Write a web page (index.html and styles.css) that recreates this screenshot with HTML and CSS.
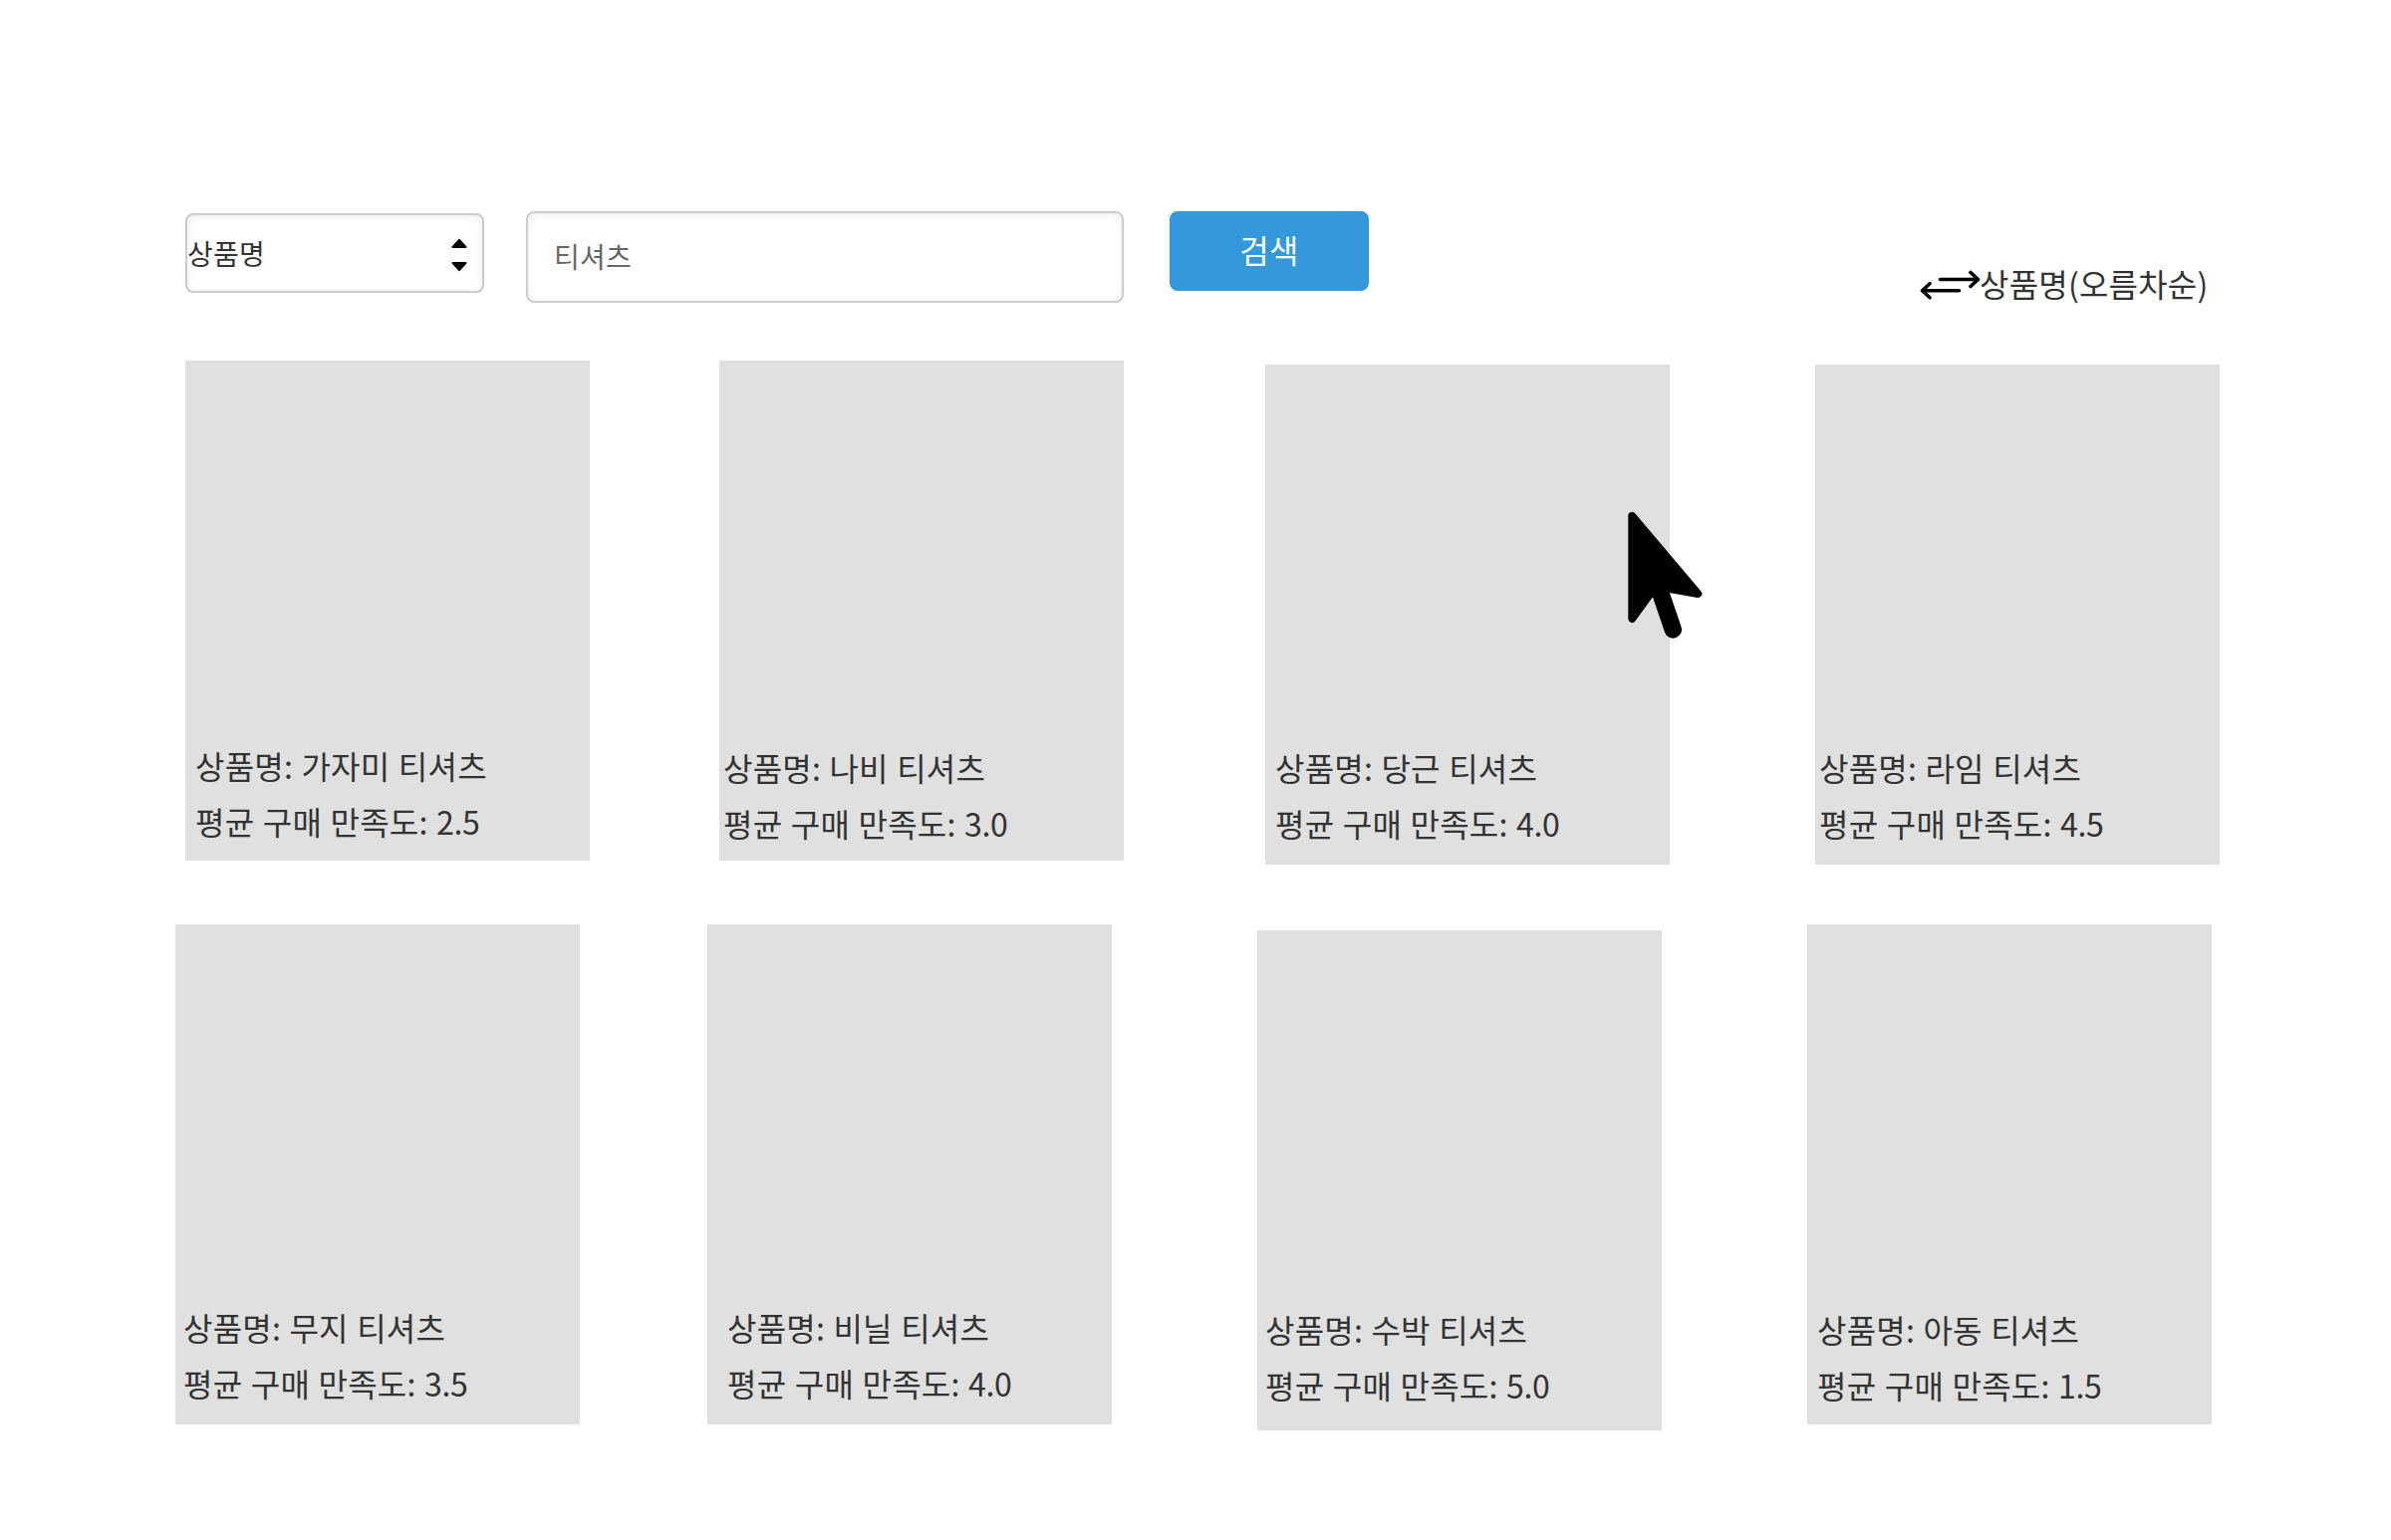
FILE: index.html
```html
<!DOCTYPE html>
<html lang="ko">
<head>
<meta charset="utf-8">
<title>상품 검색</title>
<link rel="stylesheet" href="styles.css">
</head>
<body>
<main class="page">
  <header class="toolbar">
    <div class="select">
      <span>상품명</span>
      <svg class="select-arrows" width="16" height="34" viewBox="0 0 16 34"><path d="M8 .5 15.4 8.6Q16 10 14.5 10H1.5Q0 10 .6 8.6ZM8 33.5.6 25.4Q0 24 1.5 24H14.5Q16 24 15.4 25.4Z"/></svg>
    </div>
    <div class="search">티셔츠</div>
    <button class="submit">검색</button>
    <div class="sort">
      <svg width="61" height="32" viewBox="0 0 61 32" fill="none" stroke="#000" stroke-width="3.6" stroke-linecap="round" stroke-linejoin="round"><path d="M20.500 10.500H58M51 3.500 58.500 10.500 51 17.500M39.500 21.700H3M10 14.700 2.500 21.700 10 28.700"/></svg>
      <span class="sort-label">상품명(오름차순)</span>
    </div>
  </header>
  <section class="row row-first">
    <article class="card card-a"><p>상품명: 가자미 티셔츠</p><p>평균 구매 만족도: <span class="rating">2.5</span></p></article>
    <article class="card card-b"><p>상품명: 나비 티셔츠</p><p>평균 구매 만족도: <span class="rating">3.0</span></p></article>
    <article class="card card-c"><p>상품명: 당근 티셔츠</p><p>평균 구매 만족도: <span class="rating">4.0</span></p></article>
    <article class="card card-d"><p>상품명: 라임 티셔츠</p><p>평균 구매 만족도: <span class="rating">4.5</span></p></article>
  </section>
  <section class="row row-second">
    <article class="card card-e"><p>상품명: 무지 티셔츠</p><p>평균 구매 만족도: <span class="rating">3.5</span></p></article>
    <article class="card card-f"><p>상품명: 비닐 티셔츠</p><p>평균 구매 만족도: <span class="rating">4.0</span></p></article>
    <article class="card card-g"><p>상품명: 수박 티셔츠</p><p>평균 구매 만족도: <span class="rating">5.0</span></p></article>
    <article class="card card-h"><p>상품명: 아동 티셔츠</p><p>평균 구매 만족도: <span class="rating">1.5</span></p></article>
  </section>
  <svg class="cursor" width="76" height="130" viewBox="0 0 76 130"><path d="M4.300 5 70.300 83 28 75.500 4.300 108Z" stroke="#000" stroke-width="8" stroke-linejoin="round"/><path d="M30 74 45.300 119" stroke="#000" stroke-width="17.500" stroke-linecap="round"/></svg>
</main>
</body>
</html>
```
FILE: styles.css
```css
* { box-sizing: border-box; }
body {
  margin: 0;
  background: #fff;
  color: #333;
  font: 32px/56px "Noto Sans CJK KR", sans-serif;
  font-kerning: none;
  font-feature-settings: "calt" 0, "locl" 0;
  letter-spacing: .2px;
  word-spacing: 1.1px;
}
p { margin: 0; }
svg { display: block; flex: none; }
.page {
  position: relative;
  width: 2400px;
  height: 1546px;
  padding: 212px 0 0 176px;
  overflow: hidden;
}
.toolbar {
  display: flex;
  align-items: flex-start;
  height: 150px;
  padding-left: 10px;
}
.select, .search {
  display: flex;
  align-items: center;
  border: 2px solid #ccc;
  border-radius: 8px;
  box-shadow: inset 0 2px 8px rgba(0, 0, 0, .08);
  font-size: 28px;
  line-height: 40px;
}
.select {
  justify-content: space-between;
  width: 300px;
  height: 80px;
  margin-top: 2px;
  padding-right: 15px;
}
.select-arrows { margin-top: 4px; }
.search {
  width: 600px;
  height: 92px;
  margin-left: 42px;
  padding: 0 0 3px 26px;
  color: #666;
}
.submit {
  width: 200px;
  height: 80px;
  margin-left: 46px;
  padding: 0 0 4px;
  border: 0;
  border-radius: 8px;
  background: #3498db;
  color: #fff;
  font: inherit;
  letter-spacing: inherit;
}
.sort {
  display: flex;
  align-items: center;
  margin: 48px 0 0 553px;
  white-space: nowrap;
}
.sort-label { margin: -4px 0 0 -1px; }
.row { display: flex; align-items: flex-start; }
.row-first { height: 566px; padding-left: 10px; }
.card {
  display: flex;
  flex: none;
  flex-direction: column;
  justify-content: flex-end;
  width: 406px;
  height: 502px;
  background: #e0e0e0;
  white-space: nowrap;
}
.rating { letter-spacing: -.3px; }
.card-a { padding: 0 0 12px 10px; }
.card-b { margin-left: 130px; padding: 0 0 10px 4px; }
.card-c { margin: 4px 0 0 142px; padding: 0 0 14px 10px; }
.card-d { margin: 4px 0 0 146px; padding: 0 0 14px 4px; }
.card-e { padding: 0 0 14px 8px; }
.card-f { margin-left: 128px; padding: 0 0 14px 20px; }
.card-g { margin: 6px 0 0 146px; padding: 0 0 18px 8px; }
.card-h { margin-left: 146px; padding: 0 0 12px 10px; }
.cursor {
  position: absolute;
  left: 1634px;
  top: 513px;
}
```
